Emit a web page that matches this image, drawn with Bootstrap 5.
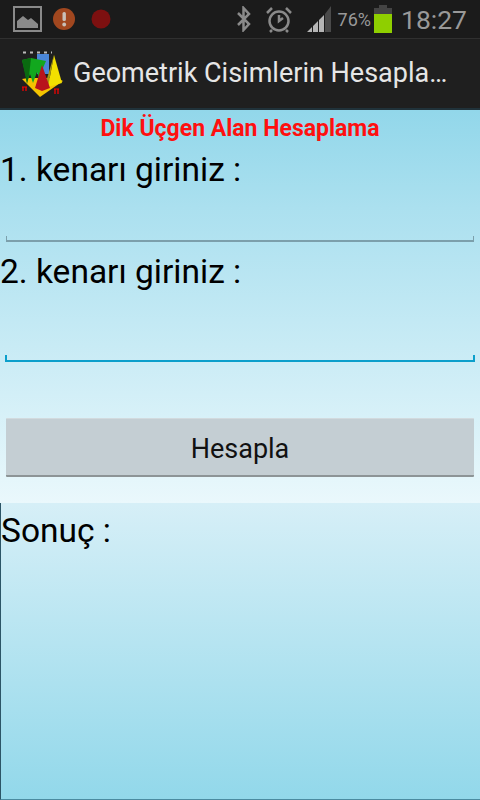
<!DOCTYPE html>
<html lang="tr">
<head>
    <meta charset="utf-8">
    <title>Geometrik Cisimlerin Hesaplanması</title>
    <link rel="stylesheet" href="https://cdn.jsdelivr.net/npm/bootstrap@5.3.0/dist/css/bootstrap.min.css">
    <style>
        html, body { height: 800px; overflow: hidden; }
        body { font-family: Roboto, "Liberation Sans", sans-serif; background: #1f1f1f; }
        .status-strip { height: 39px; background: #1b1b1b; border-bottom: 1px solid #303030; color: #8f8f8f; padding: 0 13px; }
        .status-clock { font-size: 26.500px; line-height: 39px; color: #999; margin-left: 9px; }
        .status-pct { font-size: 18px; color: #999; margin-left: 3px; margin-right: 3px; }
        .gap-warn { margin-left: 11px; }
        .gap-dot { margin-left: 16px; }
        .gap-alarm { margin-left: 15px; }
        .gap-signal { margin-left: 15px; }
        .app-strip { height: 71px; background: #1f1f1f; padding-left: 22px; border-bottom: 2px solid #20323a; }
        .app-title { font-size: 27px; color: #e6e6e6; margin-left: 9px; white-space: nowrap; }
        .form-panel { height: 393px; background: linear-gradient(#92d7ea 0%, #abe0ef 25%, #c8ebf5 60%, #eaf8fc 100%); }
        .result-panel { height: 297px; background: linear-gradient(#d6eff7, #92d8ea); border-left: 1px solid #2c5566; border-bottom: 1px solid #4b8ba0; }
        .page-head { font-size: 23px; font-weight: 700; color: #ff1010; line-height: 24px; padding-top: 7px; padding-bottom: 10px; text-align: center; }
        .field-label { font-size: 33.500px; line-height: 38px; color: #000; }
        .field-a, .field-b { background-repeat: no-repeat; }
        .field-a {
            height: 53px; margin: 0 6px 11px;
            background-image: linear-gradient(#7c9fab, #7c9fab), linear-gradient(#7c9fab, #7c9fab), linear-gradient(#7c9fab, #7c9fab);
            background-size: 100% 2px, 1px 6px, 1px 6px;
            background-position: left bottom, left bottom, right bottom;
        }
        .field-b {
            height: 71px; margin: 0 5px;
            background-image: linear-gradient(#0c9fcb, #0c9fcb), linear-gradient(#0c9fcb, #0c9fcb), linear-gradient(#0c9fcb, #0c9fcb);
            background-size: 100% 2px, 2px 7px, 2px 7px;
            background-position: left bottom, left bottom, right bottom;
        }
        .calc-btn { height: 59px; margin: 56px 6px 0; padding-top: 10px; width: 468px; background: #c4ced3; color: #111; font-size: 27px; border: 0; border-top: 1px solid #d2dade; border-bottom: 2px solid #8d9496; border-radius: 1px; }
        .calc-btn:hover { background: #c4ced3; color: #111; }
        .result-text { font-size: 33.500px; line-height: 38px; color: #000; padding-top: 9px; }
    </style>
</head>
<body>
<div class="status-strip d-flex align-items-center">
    <svg width="29" height="26" viewBox="0 0 29 26"><rect x="1" y="1" width="27" height="24" fill="none" stroke="#8a8a8a" stroke-width="2"/><path d="M4 22V15l6-5 5 4 3-2 7 6v4z" fill="#8a8a8a"/></svg>
    <svg class="gap-warn" width="22" height="22" viewBox="0 0 22 22"><circle cx="11" cy="11" r="11" fill="#a1471f"/><rect x="9.500" y="4" width="3.400" height="9" rx="1.500" fill="#c9c0b8"/><circle cx="11.200" cy="16.500" r="1.900" fill="#c9c0b8"/></svg>
    <svg class="gap-dot" width="20" height="20" viewBox="0 0 20 20"><circle cx="10" cy="10" r="9.500" fill="#7d1010"/></svg>
    <div class="ms-auto d-flex align-items-center">
        <svg width="14" height="26" viewBox="0 0 14 26"><path d="M1 7l11 11-5.500 6V2L12 8 1 19" fill="none" stroke="#8a8a8a" stroke-width="2.500"/></svg>
        <svg class="gap-alarm" width="26" height="27" viewBox="0 0 26 27"><circle cx="13" cy="15" r="9.500" fill="none" stroke="#8a8a8a" stroke-width="2.500"/><path d="M13 9v6l4-3M1 7l5-5M25 7l-5-5M6 24l-2 2M20 24l2 2" fill="none" stroke="#8a8a8a" stroke-width="2.500"/></svg>
        <svg class="gap-signal" width="28" height="28" viewBox="0 0 28 28"><path d="M0 27l5-5v5zM6 21l5-5v11H6zM12 15l5-5v17h-5z" fill="#b5b5b5"/><path d="M18 9l6-8v26h-6z" fill="#4a4a4a"/></svg>
        <span class="status-pct">76%</span>
        <svg width="18" height="28" viewBox="0 0 18 28"><path d="M5 0h8v3h5v6H0V3h5z" fill="#444"/><rect y="9" width="18" height="19" fill="#8fcf00"/></svg>
        <span class="status-clock">18:27</span>
    </div>
</div>
<div class="app-strip d-flex align-items-center">
    <svg width="42" height="46" viewBox="0 0 42 46">
        <path d="M0 28l18 18 23-16-6-3H6z" fill="#f4c400"/>
        <path d="M15 3h12v20H15z" fill="#4a86d8"/>
        <path d="M0 9l9-2 15 3-3 7-3 14-3-10-4 11-3-9-3 8-2-10z" fill="#12a81e"/>
        <path d="M0 9l5 24 2-8 2-18z" fill="#0a6a10"/>
        <path d="M32 4l8 28-14 4z" fill="#f2e000"/>
        <path d="M32 4l-8 27 2 5z" fill="#a89a10"/>
        <path d="M20 14l8 23-8 3-7-3z" fill="#b8141c"/>
        <path d="M1 1.500h29" stroke="#bbb" stroke-width="2" stroke-dasharray="3 4"/>
        <path d="M0 36h5M1 36v4M4 36v4M32 38h5M33 38v5M36 38v5" stroke="#f00" stroke-width="1.200"/>
    </svg>
    <span class="app-title">Geometrik Cisimlerin Hesapla…</span>
</div>
<main class="form-panel">
    <div class="page-head">Dik Üçgen Alan Hesaplama</div>
    <div class="field-label">1. kenarı giriniz :</div>
    <div class="field-a"></div>
    <div class="field-label">2. kenarı giriniz :</div>
    <div class="field-b"></div>
    <button type="button" class="btn calc-btn d-block">Hesapla</button>
</main>
<section class="result-panel">
    <div class="result-text">Sonuç :</div>
</section>
<script src="https://cdn.jsdelivr.net/npm/bootstrap@5.3.0/dist/js/bootstrap.bundle.min.js"></script>
</body>
</html>
